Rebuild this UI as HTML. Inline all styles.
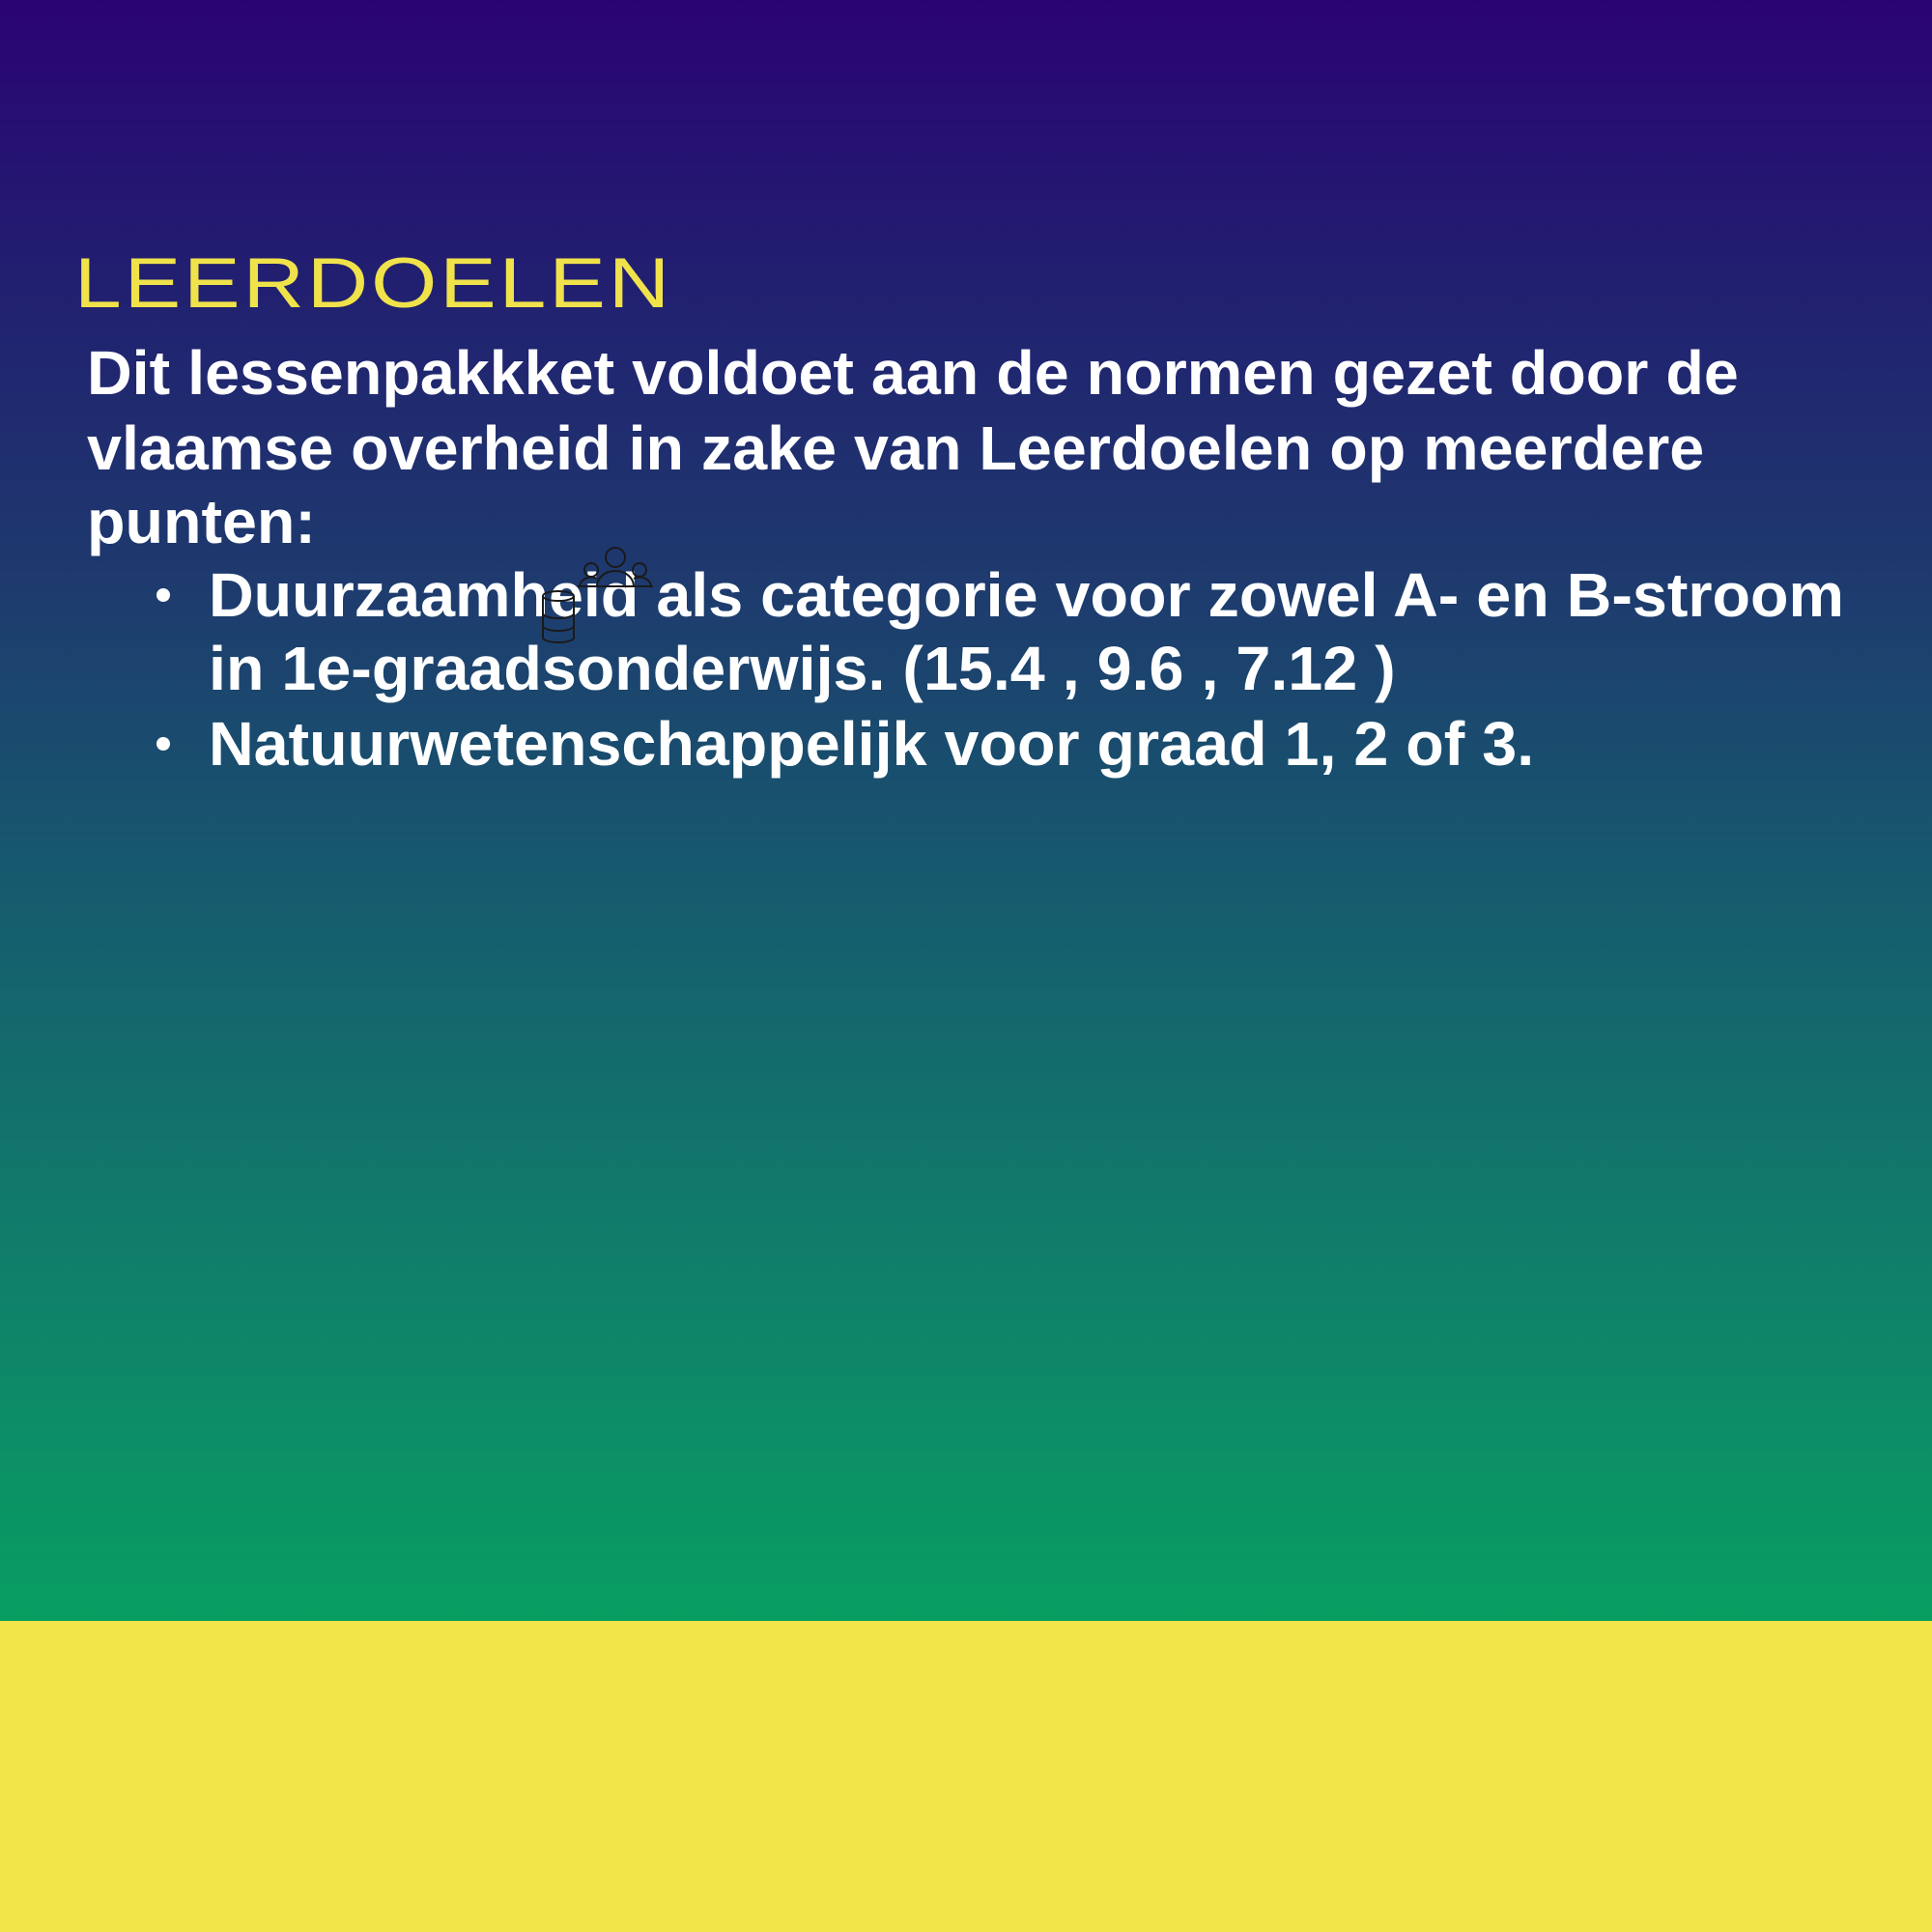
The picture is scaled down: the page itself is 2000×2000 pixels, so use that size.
<!DOCTYPE html>
<html><head><meta charset="utf-8"><style>
html,body{margin:0;padding:0}
body{width:2000px;height:2000px;position:relative;overflow:hidden;
background:linear-gradient(180deg,#2a0373 0px,#212070 300px,#1e3a6e 600px,#16596e 900px,#117a6b 1250px,#089e62 1678px,#089e62 1678px);}
.yb{position:absolute;left:0;top:1678px;width:2000px;height:322px;background:#f1e54a}
.t{position:absolute;left:77px;top:257px;font:73px/73px "Liberation Sans",sans-serif;color:#f0e24a;letter-spacing:2.5px;white-space:nowrap;transform-origin:0 0;transform:scaleX(1.2)}
.l{position:absolute;font:bold 64px/64px "Liberation Sans",sans-serif;color:#fff;white-space:nowrap;transform-origin:0 0;transform:scaleX(1.01)}
.b{position:absolute;width:14px;height:14px;border-radius:50%;background:#fff}
</style></head><body>
<div class="t">LEERDOELEN</div>
<div class="l" style="left:90px;top:354px">Dit lessenpakkket voldoet aan de normen gezet door de</div>
<div class="l" style="left:90px;top:432px">vlaamse overheid in zake van Leerdoelen op meerdere</div>
<div class="l" style="left:90px;top:508px">punten:</div>
<div class="b" style="left:162px;top:609px"></div>
<div class="l" style="left:216px;top:584px">Duurzaamheid als categorie voor zowel A- en B-stroom</div>
<div class="l" style="left:216px;top:660px">in 1e-graadsonderwijs. (15.4 , 9.6 , 7.12 )</div>
<div class="b" style="left:162px;top:763px"></div>
<div class="l" style="left:216px;top:738px">Natuurwetenschappelijk voor graad 1, 2 of 3.</div>
<svg style="position:absolute;left:540px;top:555px" width="150" height="120" viewBox="0 0 150 120" fill="none" stroke="#1a1a1a" stroke-width="2">
<circle cx="97" cy="22" r="10"/><circle cx="72" cy="35" r="7"/><circle cx="122" cy="35" r="7"/>
<path d="M78 52 a19 16 0 0 1 38 0"/><path d="M60 52 a12 10 0 0 1 18 -8"/><path d="M116 44 a12 10 0 0 1 18 8"/><path d="M58 52 H136"/>
<ellipse cx="38" cy="62" rx="16" ry="5"/><path d="M22 62 V105 a16 5 0 0 0 32 0 V62"/><path d="M22 80 a16 5 0 0 0 32 0"/><path d="M22 93 a16 5 0 0 0 32 0"/>
</svg>
<div class="yb"></div>
</body></html>
